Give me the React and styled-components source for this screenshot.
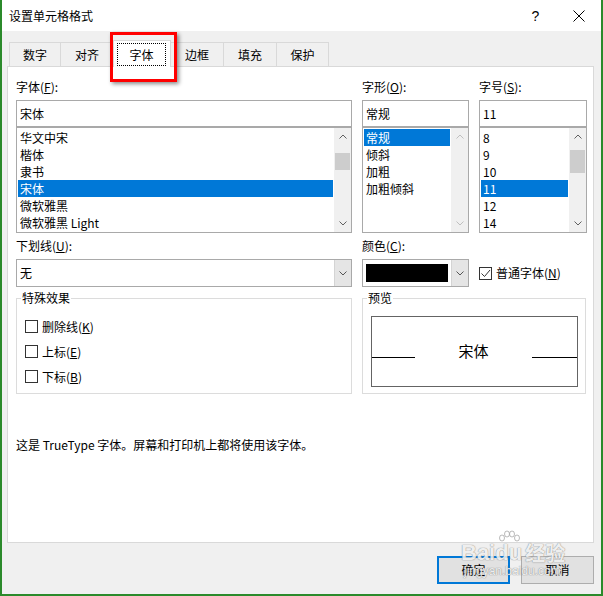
import React from 'react';
import styled, { createGlobalStyle, css } from 'styled-components';

const GlobalStyle = createGlobalStyle`
  html, body {
    margin: 0;
    padding: 0;
    background: #fff;
  }
  body {
    font-family: "Noto Sans CJK SC", "Noto Sans", sans-serif;
    font-size: 12px;
    color: #000;
  }
  * {
    box-sizing: border-box;
  }
`;

const Window = styled.div`
  position: relative;
  width: 603px;
  height: 596px;
  display: flex;
  flex-direction: column;
  background: #f0f0f0;
  border: 2px solid #2b8a2b;
  border-top: none;
  overflow: hidden;
`;

const TitleBar = styled.div`
  flex: none;
  height: 31px;
  display: flex;
  align-items: center;
  background: #fff;
  padding-left: 7px;
`;

const Title = styled.span`
  flex: 1;
  line-height: 16px;
`;

const CaptionButton = styled.div`
  width: 45px;
  height: 31px;
  display: flex;
  align-items: center;
  justify-content: center;
  font-family: "Liberation Sans", Arial, sans-serif;
  font-size: 14px;
  padding-left: ${p => p.$shift || 0}px;
`;

const Body = styled.div`
  flex: 1;
  display: flex;
  flex-direction: column;
  padding: 11px 7px 10px 5px;
`;

const TabStrip = styled.div`
  display: flex;
  align-items: flex-end;
  height: 24px;
  margin-left: 2px;
`;

const Tab = styled.div`
  width: ${p => p.$w}px;
  height: 24px;
  margin-right: -1px;
  display: flex;
  align-items: center;
  justify-content: center;
  border: 1px solid #d9d9d9;
  border-bottom: none;
  background: #f0f0f0;
  line-height: 16px;

  ${p => p.$active && css`
    position: relative;
    z-index: 1;
    height: 27px;
    margin-bottom: -1px;
    background: #fff;
    align-items: stretch;
  `}
`;

const FocusRing = styled.span`
  flex: 1;
  margin: 2px 4px 1px 3px;
  border: 1px dotted #000;
  display: flex;
  align-items: center;
  justify-content: center;
`;

const Panel = styled.div`
  flex: 1;
  background: #fff;
  border: 1px solid #d9d9d9;
  padding: 11px 6px 0 8px;
`;

const FieldGrid = styled.div`
  display: grid;
  grid-template-columns: 336px 107px 108px;
  column-gap: 10px;
`;

const Label = styled.div`
  height: 18px;
  line-height: 18px;
  margin-bottom: 4px;
  white-space: nowrap;
`;

const TextBox = styled.div`
  height: 27px;
  border: 1px solid #a9a9a9;
  padding: 0 3px;
  display: flex;
  align-items: center;
  line-height: 16px;
`;

const ListFrame = styled.div`
  height: 106px;
  margin-bottom: 4px;
  border: 1px solid #a9a9a9;
  display: flex;
`;

const ListItems = styled.div`
  flex: 1;
  padding: 1px;
  overflow: hidden;
`;

const ListItem = styled.div`
  height: 17px;
  line-height: 17px;
  padding-left: 2px;
  white-space: nowrap;
  ${p => p.$selected && css`
    background: #0078d7;
    color: #fff;
  `}
`;

const ScrollBar = styled.div`
  width: 17px;
  flex: none;
  display: flex;
  flex-direction: column;
  background: #f0f0f0;
`;

const ScrollArrow = styled.div`
  height: 17px;
  display: flex;
  align-items: center;
  justify-content: center;
  color: ${p => (p.$disabled ? '#bfbfbf' : '#606060')};
`;

const ScrollTrack = styled.div`
  flex: 1;
`;

const ScrollThumb = styled.div`
  margin: ${p => p.$top}px 1px 0;
  height: ${p => p.$height}px;
  background: #cdcdcd;
`;

const Combo = styled.div`
  height: 28px;
  border: 1px solid #a9a9a9;
  display: flex;
  background: #fff;
`;

const ComboValue = styled.div`
  flex: 1;
  padding: 0 3px;
  display: flex;
  align-items: center;
  line-height: 16px;
`;

const Swatch = styled.div`
  flex: 1;
  margin: 4px 3px 4px 3px;
  background: #000;
`;

const DropButton = styled.div`
  width: 17px;
  flex: none;
  display: flex;
  align-items: center;
  justify-content: center;
  background: #e5e5e5;
  border-left: 1px solid #d4d4d4;
  color: #555;
`;

const CheckRow = styled.label`
  display: flex;
  align-items: center;
  gap: 4px;
  height: 25px;
  line-height: 16px;
  align-self: center;
`;

const Box = styled.span`
  width: 13px;
  height: 13px;
  flex: none;
  border: 1px solid #333;
  background: #fff;
  display: flex;
  align-items: center;
  justify-content: center;
  color: #333;
`;

const Group = styled.fieldset`
  margin: 2px ${p => p.$right || 0}px 0 0;
  padding: 0;
  min-width: 0;
  border: 1px solid #dcdcdc;
  grid-column: ${p => p.$span || 'auto'};
`;

const Legend = styled.legend`
  margin-left: 4px;
  padding: 0 1px;
  line-height: 18px;
  font-size: 12px;
`;

const GroupBody = styled.div`
  padding: ${p => p.$pad};
`;

const PreviewBox = styled.div`
  height: 71px;
  border: 1px solid #646464;
  background: #fff;
  display: flex;
  align-items: flex-end;
  padding-bottom: 28px;
`;

const PreviewLine = styled.div`
  width: ${p => p.$w}px;
  height: 1px;
  background: #000;
`;

const PreviewText = styled.div`
  flex: 1;
  text-align: center;
  font-size: 15px;
  line-height: 15px;
`;

const Info = styled.div`
  margin-top: 42px;
  line-height: 18px;
`;

const ButtonRow = styled.div`
  flex: none;
  display: flex;
  justify-content: flex-end;
  gap: 11px;
  margin-top: 13px;
  height: 28px;
`;

const Button = styled.div`
  width: 73px;
  height: 28px;
  display: flex;
  align-items: center;
  justify-content: center;
  background: #e1e1e1;
  border: 1px solid #adadad;
  line-height: 16px;
  ${p => p.$default && css`
    border: 2px solid #0078d7;
  `}
`;

const Callout = styled.div`
  position: absolute;
  left: 108px;
  top: 32px;
  width: 67px;
  height: 50px;
  border: 3px solid #f00;
  box-shadow: 2px 2px 4px rgba(0, 0, 0, 0.45);
  pointer-events: none;
`;

const Watermark = styled.div`
  position: absolute;
  left: 459px;
  top: 530px;
  display: flex;
  flex-direction: column;
  color: rgba(255, 255, 255, 0.9);
  text-shadow: 0 0 1px rgba(120, 120, 120, 0.8), 0 0 1px rgba(120, 120, 120, 0.8);
  pointer-events: none;
  opacity: 0.9;
`;

const MarkTop = styled.div`
  display: flex;
  align-items: flex-end;
  height: 34px;
`;

const MarkBrand = styled.span`
  font-family: "Liberation Sans", Arial, sans-serif;
  font-weight: bold;
  font-size: 22px;
  line-height: 22px;
`;

const MarkCn = styled.span`
  font-size: 20px;
  line-height: 22px;
  margin-left: 3px;
  font-weight: bold;
`;

const MarkUrl = styled.div`
  font-family: "Liberation Sans", Arial, sans-serif;
  font-size: 12px;
  line-height: 14px;
  margin-left: 3px;
`;

const Paw = styled.span`
  display: flex;
  flex-direction: column;
  align-items: center;
`;

const Chevron = ({ up }) => (
  <svg width="8" height="5" viewBox="0 0 8 5">
    <polyline
      points={up ? '0.5,4.5 4,1 7.5,4.5' : '0.5,0.5 4,4 7.5,0.5'}
      fill="none"
      stroke="currentColor"
      strokeWidth="1"
    />
  </svg>
);

const Check = () => (
  <svg width="11" height="11" viewBox="0 0 11 11">
    <polyline points="1.5,5.5 4.5,8.5 10,2" fill="none" stroke="currentColor" strokeWidth="1" />
  </svg>
);

const tabs = [
  { label: '数字', w: 52 },
  { label: '对齐', w: 54 },
  { label: '字体', w: 58, active: true },
  { label: '边框', w: 54 },
  { label: '填充', w: 54 },
  { label: '保护', w: 53 }
];

const fonts = ['华文中宋', '楷体', '隶书', '宋体', '微软雅黑', '微软雅黑 Light'];
const fontStyles = ['常规', '倾斜', '加粗', '加粗倾斜'];
const sizes = ['8', '9', '10', '11', '12', '14'];

const ListBox = ({ items, selected, thumb, disabled }) => (
  <ListFrame>
    <ListItems>
      {items.map(item => (
        <ListItem key={item} $selected={item === selected}>
          {item}
        </ListItem>
      ))}
    </ListItems>
    <ScrollBar>
      <ScrollArrow $disabled={disabled}>
        <Chevron up />
      </ScrollArrow>
      <ScrollTrack>
        {thumb ? <ScrollThumb $top={thumb.top} $height={thumb.height} /> : null}
      </ScrollTrack>
      <ScrollArrow $disabled={disabled}>
        <Chevron />
      </ScrollArrow>
    </ScrollBar>
  </ListFrame>
);

const CheckBox = ({ checked, children }) => (
  <CheckRow>
    <Box>{checked ? <Check /> : null}</Box>
    <span>{children}</span>
  </CheckRow>
);

export default function App() {
  return (
    <>
      <GlobalStyle />
      <Window>
        <TitleBar>
          <Title>设置单元格格式</Title>
          <CaptionButton $shift={4}>?</CaptionButton>
          <CaptionButton>
            <svg width="12" height="12" viewBox="0 0 12 12">
              <path d="M0.5 0.5 L11.5 11.5 M11.5 0.5 L0.5 11.5" stroke="#000" strokeWidth="1" />
            </svg>
          </CaptionButton>
        </TitleBar>

        <Body>
          <TabStrip>
            {tabs.map(tab => (
              <Tab key={tab.label} $w={tab.w} $active={tab.active}>
                {tab.active ? <FocusRing>{tab.label}</FocusRing> : tab.label}
              </Tab>
            ))}
          </TabStrip>

          <Panel>
            <FieldGrid>
              <Label>字体(<u>F</u>):</Label>
              <Label>字形(<u>O</u>):</Label>
              <Label>字号(<u>S</u>):</Label>

              <TextBox>宋体</TextBox>
              <TextBox>常规</TextBox>
              <TextBox>11</TextBox>

              <ListBox items={fonts} selected="宋体" thumb={{ top: 8, height: 17 }} />
              <ListBox items={fontStyles} selected="常规" disabled />
              <ListBox items={sizes} selected="11" thumb={{ top: 5, height: 23 }} />

              <Label>下划线(<u>U</u>):</Label>
              <Label>颜色(<u>C</u>):</Label>
              <div />

              <Combo>
                <ComboValue>无</ComboValue>
                <DropButton>
                  <Chevron />
                </DropButton>
              </Combo>
              <Combo>
                <Swatch />
                <DropButton>
                  <Chevron />
                </DropButton>
              </Combo>
              <CheckBox checked>
                普通字体(<u>N</u>)
              </CheckBox>

              <Group>
                <Legend>特殊效果</Legend>
                <GroupBody $pad="7px 8px 4px 8px">
                  <CheckBox>删除线(<u>K</u>)</CheckBox>
                  <CheckBox>上标(<u>E</u>)</CheckBox>
                  <CheckBox>下标(<u>B</u>)</CheckBox>
                </GroupBody>
              </Group>
              <Group $span="span 2" $right={1}>
                <Legend>预览</Legend>
                <GroupBody $pad="9px 7px 5px 8px">
                  <PreviewBox>
                    <PreviewLine $w={43} />
                    <PreviewText>宋体</PreviewText>
                    <PreviewLine $w={45} />
                  </PreviewBox>
                </GroupBody>
              </Group>
            </FieldGrid>

            <Info>这是 TrueType 字体。屏幕和打印机上都将使用该字体。</Info>
          </Panel>

          <ButtonRow>
            <Button $default>确定</Button>
            <Button>取消</Button>
          </ButtonRow>
        </Body>

        <Callout />

        <Watermark>
          <MarkTop>
            <MarkBrand>Bai</MarkBrand>
            <Paw>
              <svg width="22" height="12" viewBox="0 0 22 12">
                <g fill="rgba(255,255,255,0.9)" stroke="rgba(120,120,120,0.7)" strokeWidth="0.8">
                  <ellipse cx="4" cy="8" rx="2.5" ry="3" />
                  <ellipse cx="9" cy="4" rx="2.5" ry="3" />
                  <ellipse cx="14" cy="4" rx="2.5" ry="3" />
                  <ellipse cx="19" cy="8" rx="2.5" ry="3" />
                </g>
              </svg>
              <MarkBrand>du</MarkBrand>
            </Paw>
            <MarkCn>经验</MarkCn>
          </MarkTop>
          <MarkUrl>jingyan.baidu.com</MarkUrl>
        </Watermark>
      </Window>
    </>
  );
}
